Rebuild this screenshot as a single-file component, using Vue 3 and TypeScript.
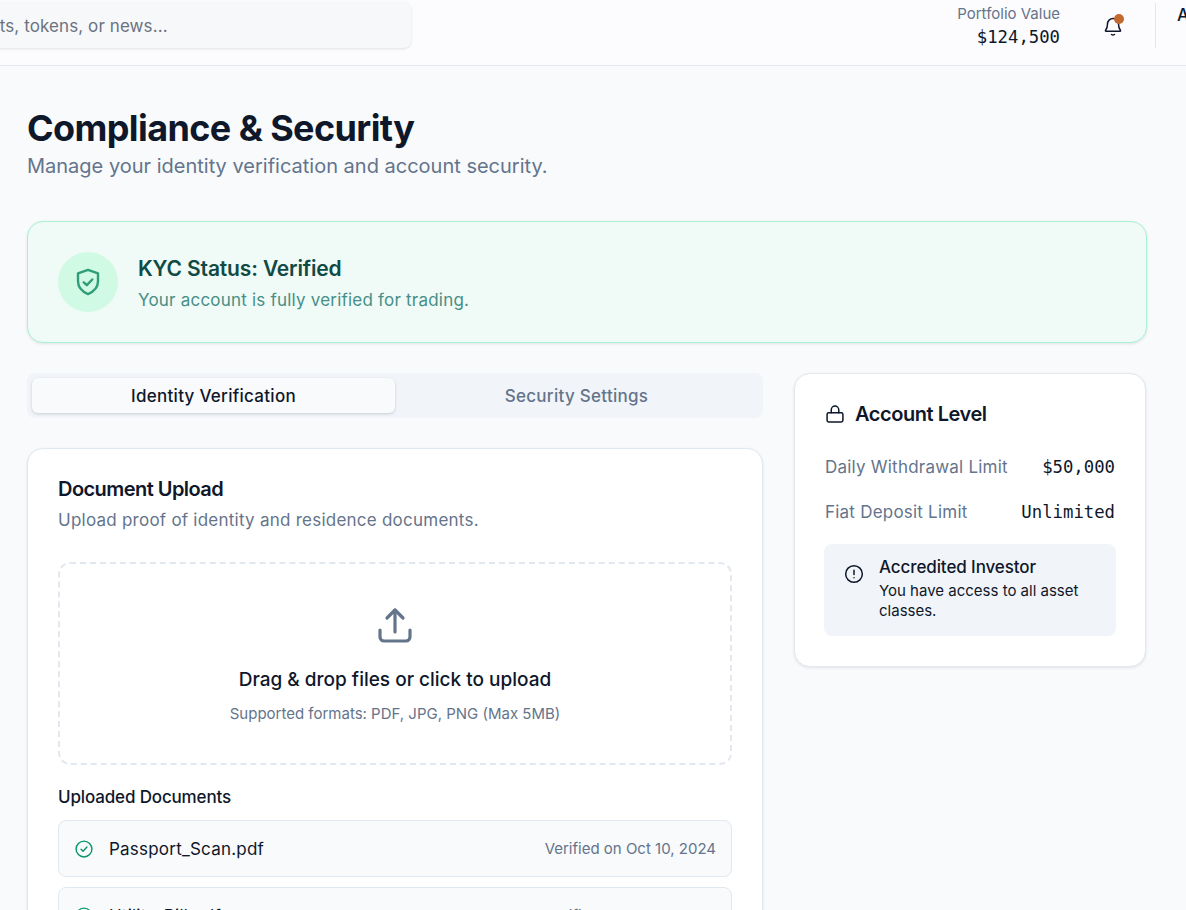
<script setup lang="ts">
const limits = [
  { label: 'Daily Withdrawal Limit', value: '$50,000' },
  { label: 'Fiat Deposit Limit', value: 'Unlimited' },
];

const documents = [
  { name: 'Passport_Scan.pdf', status: 'Verified on Oct 10, 2024' },
  { name: 'Utility_Bill.pdf', status: 'Verified on Oct 12, 2024' },
];
</script>

<template>
  <div class="page">
    <header class="topbar">
      <div class="search">Search assets, tokens, or news...</div>
      <div class="portfolio">
        <span class="portfolio-label">Portfolio Value</span>
        <span class="portfolio-value">$124,500</span>
      </div>
      <div class="bell">
        <svg width="24" height="24" viewBox="0 0 24 24" fill="none" stroke="currentColor" stroke-width="1.5" stroke-linecap="round" stroke-linejoin="round">
          <path d="M6.500 10a5.500 5.500 0 0 1 11 0c0 3.600 1 5.300 2 6.500a.5.5 0 0 1-.4.8H4.900a.5.5 0 0 1-.4-.8c1-1.200 2-2.900 2-6.500Z" />
          <path d="M10.500 20.500c.9.700 2.100.7 3 0" />
        </svg>
        <span class="bell-dot"></span>
      </div>
      <div class="user">
        <span class="user-name">Alex Morgan</span>
      </div>
    </header>

    <main class="content">
      <h1 class="title">Compliance &amp; Security</h1>
      <p class="subtitle">Manage your identity verification and account security.</p>

      <section class="kyc">
        <div class="kyc-icon">
          <svg width="32" height="32" viewBox="0 0 24 24" fill="none" stroke="currentColor" stroke-width="1.800" stroke-linecap="round" stroke-linejoin="round">
            <path d="M12 2.900 19.500 5.600V11.500c0 4.300-2.900 7.600-7.500 9.600-4.600-2-7.500-5.300-7.500-9.600V5.600L12 2.900Z" />
            <path d="m8.800 12.200 2.300 2.200 4.100-4.300" />
          </svg>
        </div>
        <div>
          <h2 class="kyc-title">KYC Status: Verified</h2>
          <p class="kyc-text">Your account is fully verified for trading.</p>
        </div>
      </section>

      <div class="columns">
        <div class="left">
          <div class="tabs">
            <button class="tab active">Identity Verification</button>
            <button class="tab">Security Settings</button>
          </div>

          <section class="card doc-card">
            <h3 class="card-title">Document Upload</h3>
            <p class="card-text">Upload proof of identity and residence documents.</p>

            <div class="dropzone">
              <svg class="upload-icon" width="48" height="48" viewBox="0 0 24 24" fill="none" stroke="currentColor" stroke-width="1.600" stroke-linecap="round" stroke-linejoin="round">
                <path d="M12 15V4" />
                <path d="m8 8 4-4 4 4" />
                <path d="M4.500 14v3.500a2 2 0 0 0 2 2h11a2 2 0 0 0 2-2V14" />
              </svg>
              <p class="drop-title">Drag &amp; drop files or click to upload</p>
              <p class="drop-text">Supported formats: PDF, JPG, PNG (Max 5MB)</p>
            </div>

            <h4 class="list-title">Uploaded Documents</h4>
            <div class="doc-list">
              <div v-for="doc in documents" :key="doc.name" class="doc-row">
                <svg class="check" width="20" height="20" viewBox="0 0 24 24" fill="none" stroke="currentColor" stroke-width="1.700" stroke-linecap="round" stroke-linejoin="round">
                  <circle cx="12" cy="12" r="9.500" />
                  <path d="m8.500 12.300 2.400 2.400 4.600-5" />
                </svg>
                <span class="doc-name">{{ doc.name }}</span>
                <span class="doc-status">{{ doc.status }}</span>
              </div>
            </div>
          </section>
        </div>

        <aside class="card level-card">
          <div class="level-head">
            <svg width="20" height="20" viewBox="0 0 24 24" fill="none" stroke="currentColor" stroke-width="1.800" stroke-linecap="round" stroke-linejoin="round">
              <rect x="2.500" y="10.500" width="19" height="11" rx="2" />
              <path d="M7.500 10.500V7a4.500 4.500 0 0 1 9 0v3.500" />
            </svg>
            <h3 class="level-title">Account Level</h3>
          </div>
          <div v-for="item in limits" :key="item.label" class="limit">
            <span class="limit-label">{{ item.label }}</span>
            <span class="limit-value">{{ item.value }}</span>
          </div>
          <div class="note">
            <svg class="note-icon" width="20" height="20" viewBox="0 0 24 24" fill="none" stroke="currentColor" stroke-width="1.800" stroke-linecap="round" stroke-linejoin="round">
              <circle cx="12" cy="12" r="10" />
              <path d="M12 7.500v5M12 16.500h.01" />
            </svg>
            <div>
              <div class="note-title">Accredited Investor</div>
              <div class="note-text">You have access to all asset classes.</div>
            </div>
          </div>
        </aside>
      </div>
    </main>
  </div>
</template>

<style>
html,
body {
  margin: 0;
  overflow: hidden;
  background: #f8fafc;
}
</style>

<style scoped>
.page {
  width: 1186px;
  height: 910px;
  overflow: hidden;
  font-family: Inter, "Liberation Sans", sans-serif;
  color: #0f172a;
  background: #f8fafc;
}

h1, h2, h3, h4, p {
  margin: 0;
}

.topbar {
  display: flex;
  align-items: center;
  height: 65px;
  border-bottom: 1px solid #e2e8f0;
  background: #fcfcfe;
  box-sizing: content-box;
}

.search {
  flex: none;
  box-sizing: border-box;
  width: 557px;
  height: 46px;
  margin: -15px 0 0 -146px;
  padding: 0 16px 0 46px;
  line-height: 48px;
  font-size: 17px;
  letter-spacing: 0.1px;
  color: #6b7280;
  background: #f6f8fa;
  border-radius: 8px;
  box-shadow: 0 1px 3px rgba(15, 23, 42, 0.12);
  white-space: nowrap;
}

.portfolio {
  display: flex;
  flex-direction: column;
  align-items: flex-end;
  margin-left: auto;
  margin-top: -12px;
}

.portfolio-label {
  font-size: 15px;
  line-height: 20px;
  color: #64748b;
}

.portfolio-value {
  font-family: "DejaVu Sans Mono", "Liberation Mono", monospace;
  font-size: 17.3px;
  line-height: 26px;
  font-weight: 500;
}

.bell {
  position: relative;
  display: flex;
  margin: -14px 0 0 41px;
}

.bell-dot {
  position: absolute;
  top: 0;
  right: 1px;
  width: 10px;
  height: 10px;
  border-radius: 50%;
  background: #c2692f;
}

.user {
  flex: none;
  width: 9px;
  height: 45px;
  margin: -15px 0 0 30px;
  padding-left: 21px;
  border-left: 1px solid #e2e8f0;
  overflow: hidden;
}

.user-name {
  font-size: 17px;
  line-height: 24px;
  font-weight: 500;
  white-space: nowrap;
}

.content {
  padding: 40px 39px 0 27px;
}

.title {
  font-size: 36px;
  line-height: 44px;
  font-weight: 700;
  letter-spacing: -0.6px;
}

.subtitle {
  margin-top: 2px;
  font-size: 20px;
  line-height: 28px;
  color: #64748b;
}

.kyc {
  display: flex;
  align-items: center;
  gap: 20px;
  height: 122px;
  box-sizing: border-box;
  margin-top: 41px;
  padding: 0 30px;
  background: #f0faf6;
  border: 1px solid #a7f3d0;
  border-radius: 16px;
  box-shadow: 0 1px 3px rgba(15, 23, 42, 0.1);
}

.kyc-icon {
  display: flex;
  align-items: center;
  justify-content: center;
  width: 60px;
  height: 60px;
  border-radius: 50%;
  background: #d1fae5;
  color: #2f9e78;
}

.kyc-title {
  margin-top: 3px;
  font-size: 21px;
  line-height: 28px;
  font-weight: 600;
  letter-spacing: -0.15px;
  color: #0f4a45;
}

.kyc-text {
  margin-top: 5px;
  font-size: 17px;
  line-height: 24px;
  letter-spacing: 0.21px;
  color: #478f86;
}

.columns {
  display: grid;
  grid-template-columns: 736px 352px;
  gap: 31px;
  margin-top: 30px;
}

.tabs {
  display: grid;
  grid-template-columns: 1fr 1fr;
  padding: 5px 5px 0;
  height: 45px;
  box-sizing: border-box;
  background: #f1f5f9;
  border-radius: 8px;
}

.tab {
  border: none;
  background: none;
  border-radius: 6px;
  font-family: inherit;
  font-size: 17px;
  letter-spacing: 0.28px;
  font-weight: 500;
  color: #64748b;
  height: 35px;
  padding: 0;
}

.tab.active {
  background: #f8fafc;
  color: #0f172a;
  box-shadow: 0 1px 3px rgba(15, 23, 42, 0.18);
}

.card {
  background: #ffffff;
  border: 1px solid #e2e8f0;
  border-radius: 16px;
  box-shadow: 0 1px 3px rgba(15, 23, 42, 0.1);
}

.doc-card {
  margin-top: 30px;
  padding: 26px 30px 30px;
}

.card-title {
  font-size: 20px;
  line-height: 28px;
  font-weight: 600;
  letter-spacing: -0.55px;
}

.card-text {
  margin-top: 5px;
  font-size: 17px;
  line-height: 24px;
  letter-spacing: 0.24px;
  color: #64748b;
}

.dropzone {
  display: flex;
  flex-direction: column;
  align-items: center;
  box-sizing: border-box;
  height: 203px;
  margin-top: 30px;
  padding-top: 38px;
  border: 2px dashed #e2e8f0;
  border-radius: 12px;
}

.upload-icon {
  color: #64748b;
}

.drop-title {
  margin-top: 16px;
  font-size: 19px;
  line-height: 28px;
  font-weight: 500;
}

.drop-text {
  margin-top: 10px;
  font-size: 15px;
  line-height: 20px;
  color: #64748b;
}

.list-title {
  margin-top: 20px;
  font-size: 17px;
  line-height: 24px;
  font-weight: 500;
  letter-spacing: -0.15px;
}

.doc-list {
  display: flex;
  flex-direction: column;
  gap: 10px;
  margin-top: 11px;
}

.doc-row {
  display: flex;
  align-items: center;
  height: 57px;
  box-sizing: border-box;
  padding: 0 15px;
  background: #f8fafc;
  border: 1px solid #e2e8f0;
  border-radius: 8px;
}

.check {
  flex: none;
  color: #059669;
}

.doc-name {
  margin-left: 15px;
  font-size: 17px;
  letter-spacing: 0.22px;
}

.doc-status {
  margin-left: auto;
  font-size: 15px;
  color: #64748b;
}

.level-card {
  align-self: start;
  padding: 26px 29px 30px;
}

.level-head {
  display: flex;
  align-items: center;
  gap: 10px;
  margin-bottom: 16px;
}

.level-head svg {
  margin-left: 1px;
}

.level-title {
  font-size: 20px;
  line-height: 28px;
  font-weight: 600;
  letter-spacing: -0.45px;
}

.limit {
  display: flex;
  align-items: center;
  justify-content: space-between;
  height: 45px;
  padding: 0 1px;
  font-size: 17px;
  letter-spacing: 0.22px;
}

.limit-label {
  color: #64748b;
}

.limit-value {
  font-family: "DejaVu Sans Mono", "Liberation Mono", monospace;
  font-size: 17.3px;
  letter-spacing: 0;
}

.note {
  display: flex;
  gap: 15px;
  margin-top: 10px;
  padding: 12px 20px 15px;
  background: #f1f5f9;
  border-radius: 8px;
}

.note-icon {
  flex: none;
  margin-top: 8px;
}

.note-title {
  font-size: 17px;
  line-height: 22px;
  font-weight: 500;
  letter-spacing: -0.1px;
}

.note-text {
  margin-top: 3px;
  font-size: 15px;
  line-height: 20px;
}
</style>
